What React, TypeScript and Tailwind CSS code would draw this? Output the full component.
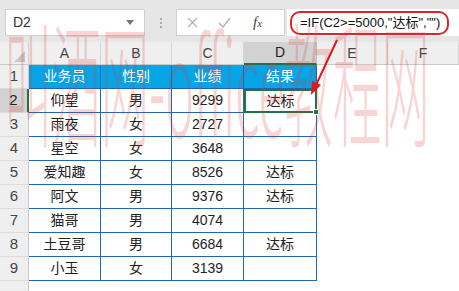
import { Fragment } from "react";

const rows = [
  ["仰望", "男", "9299", "达标"],
  ["雨夜", "女", "2727", ""],
  ["星空", "女", "3648", ""],
  ["爱知趣", "女", "8526", "达标"],
  ["阿文", "男", "9376", "达标"],
  ["猫哥", "男", "4074", ""],
  ["土豆哥", "男", "6684", "达标"],
  ["小玉", "女", "3139", ""],
];

const cols = ["A", "B", "C", "D", "E", "F"];
const gridCols = "grid grid-cols-[29px_72px_71px_72px_73px_71px_71px]";

export default function App() {
  return (
    <div className="relative w-[459px] h-[291px] overflow-hidden bg-white text-[14px] text-[#222] font-['Liberation_Sans','Noto_Sans_CJK_SC',sans-serif]">
      {/* Formula bar */}
      <div className="h-[42px] bg-[#e6e6e6] flex items-start pt-[9px] pl-[5px]">
        <div className="w-[140px] h-[27px] bg-white border border-[#d0d0d0] flex items-center justify-between pl-[7px] pr-[10px]">
          <span className="text-[#333]">D2</span>
          <svg width="8" height="5" viewBox="0 0 8 5">
            <polygon points="0,0 8,0 4,5" fill="#777" />
          </svg>
        </div>
        <div className="w-[31px] h-[27px] flex flex-col items-center justify-center gap-[2px]">
          <span className="w-[2px] h-[2px] bg-[#aaa]" />
          <span className="w-[2px] h-[2px] bg-[#aaa]" />
          <span className="w-[2px] h-[2px] bg-[#aaa]" />
        </div>
        <div className="w-[109px] h-[27px] bg-white border border-[#d0d0d0] flex items-center pl-[10px] gap-[20px]">
          <svg width="11" height="11" viewBox="0 0 11 11" stroke="#b5b5b5" strokeWidth="1.4">
            <path d="M1 1 L10 10 M10 1 L1 10" />
          </svg>
          <svg width="13" height="11" viewBox="0 0 13 11" fill="none" stroke="#b5b5b5" strokeWidth="1.6">
            <path d="M1 6 L5 10 L12 1" />
          </svg>
          <span className="ml-[2px] italic text-[#444] font-['Liberation_Serif',serif] text-[15px]">
            f<span className="text-[11px]">x</span>
          </span>
        </div>
        <div className="flex-1 h-[27px] ml-[2px] bg-white flex items-center pl-[3px]">
          <div className="h-[24px] w-[159px] border-2 border-[#d9262a] rounded-[10px] flex items-center pl-[8px] text-[#111] text-[13px] whitespace-nowrap">
            =IF(C2&gt;=5000,"达标","")
          </div>
        </div>
      </div>

      {/* Column headers */}
      <div className={`${gridCols} h-[23px] bg-[#efefef] border-b border-[#c9c9c9]`}>
        <div className="border-r border-[#d4d4d4] relative">
          <svg className="absolute right-[3px] bottom-[3px]" width="11" height="11" viewBox="0 0 11 11">
            <polygon points="11,0 11,11 0,11" fill="#c6c6c6" />
          </svg>
        </div>
        {cols.map((c) => (
          <div
            key={c}
            className={
              c === "D"
                ? "flex items-center justify-center bg-[#d2d2d2] border-b-2 border-[#217346] border-r border-r-[#bdbdbd] text-[#222]"
                : "flex items-center justify-center border-r border-[#d4d4d4] text-[#444]"
            }
          >
            {c}
          </div>
        ))}
        <div />
      </div>

      {/* Grid body */}
      <div className={gridCols}>
        {/* row 1 */}
        <div className="h-[24px] bg-[#efefef] border-r border-[#c9c9c9] border-b border-b-[#dcdcdc] flex items-center justify-center text-[#444] text-[15px]">
          1
        </div>
        {["业务员", "性别", "业绩", "结果"].map((h) => (
          <div
            key={h}
            className="h-[24px] bg-[#07a5e5] text-white border-r border-b border-[#2166b0] flex items-center justify-center"
          >
            {h}
          </div>
        ))}
        <div className="h-[24px]" />
        <div className="h-[24px]" />

        {rows.map((r, i) => (
          <Fragment key={i}>
            <div
              className={
                i === 0
                  ? "h-[24px] bg-[#d2d2d2] border-r-2 border-[#217346] border-b border-b-[#dcdcdc] flex items-center justify-center text-[#222] text-[15px]"
                  : "h-[24px] bg-[#efefef] border-r border-[#c9c9c9] border-b border-b-[#dcdcdc] flex items-center justify-center text-[#444] text-[15px]"
              }
            >
              {i + 2}
            </div>
            <div className="h-[24px] border-r border-b border-[#2166b0] flex items-center justify-center">{r[0]}</div>
            <div className="h-[24px] border-r border-b border-[#2166b0] flex items-center justify-center">{r[1]}</div>
            <div className="h-[24px] border-r border-b border-[#2166b0] flex items-center justify-center">{r[2]}</div>
            {i === 0 ? (
              <div className="relative h-[24px] border-2 border-[#217346] flex items-center justify-center">
                {r[3]}
                <span className="absolute right-[-4px] bottom-[-4px] w-[6px] h-[6px] bg-[#217346] border border-white" />
              </div>
            ) : (
              <div className="h-[24px] border-r border-b border-[#2166b0] flex items-center justify-center">{r[3]}</div>
            )}
            <div className="h-[24px]" />
            <div className="h-[24px]" />
          </Fragment>
        ))}
        <div className="h-[10px] bg-[#efefef] border-r border-[#c9c9c9]" />
      </div>

      {/* Watermark */}
      <div className="pointer-events-none absolute left-[4px] top-[12px] text-[52px] leading-none whitespace-nowrap text-[#e03030] opacity-[0.2] origin-top-left scale-y-[2.6] scale-x-[0.93] font-['Noto_Sans_CJK_SC',sans-serif] font-light">
        叫酒网-office教程网
      </div>

      {/* Red arrow */}
      <svg className="pointer-events-none absolute left-0 top-0" width="459" height="291" viewBox="0 0 459 291">
        <line x1="337" y1="40" x2="316" y2="85" stroke="#e0171c" strokeWidth="2" />
        <polygon points="311,95 312,81 321,85" fill="#e0171c" />
      </svg>
    </div>
  );
}
